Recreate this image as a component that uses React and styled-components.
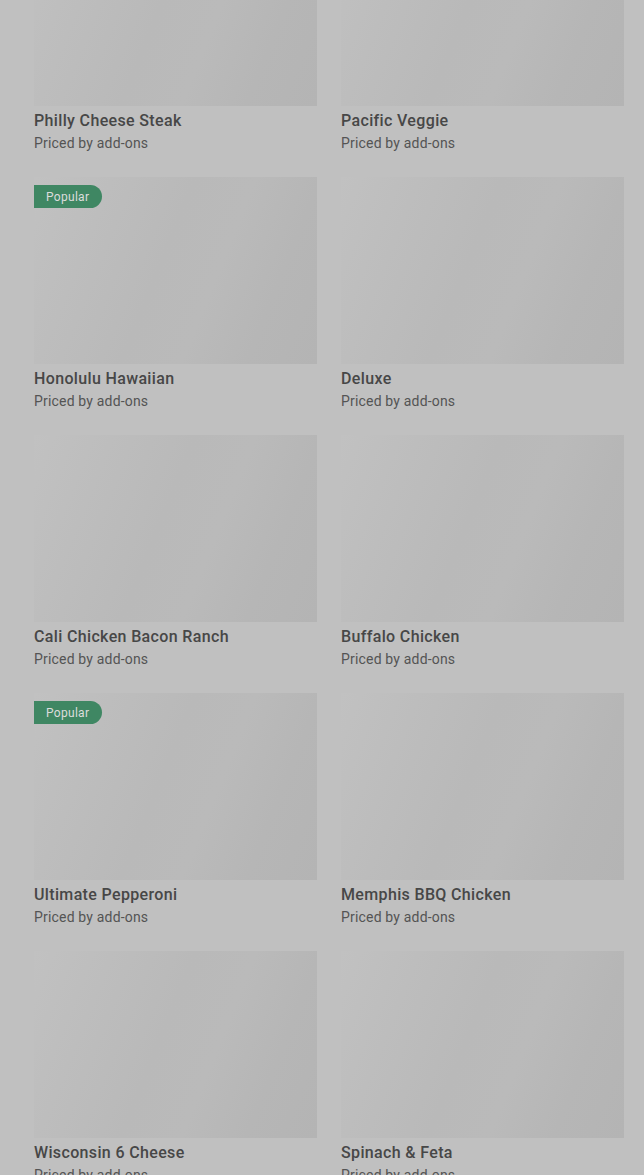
import React from 'react';
import styled, { createGlobalStyle } from 'styled-components';

const GlobalStyle = createGlobalStyle`
  html, body {
    margin: 0;
    padding: 0;
    background: #c0c0c0;
    font-family: Roboto, "Liberation Sans", sans-serif;
    overflow: hidden;
  }
`;

const Grid = styled.div`
  display: grid;
  grid-template-columns: 283px 283px;
  column-gap: 24px;
  row-gap: 25px;
  padding: 0 20px 40px 34px;
  margin-top: -81px;
`;

const Card = styled.div`
  display: flex;
  flex-direction: column;
`;

const Thumb = styled.div`
  position: relative;
  height: 187px;
  background: linear-gradient(
    112deg,
    #c1c1c1 0%,
    #bdbdbd 22%,
    #b9b9b9 45%,
    #bababa 62%,
    #b6b6b6 80%,
    #b4b4b4 100%
  );
`;

const Badge = styled.span`
  position: absolute;
  top: 8px;
  left: 0;
  height: 23px;
  padding: 0 13px 0 12px;
  display: flex;
  align-items: center;
  background: #3f8763;
  color: #dcdcdc;
  font-size: 12px;
  letter-spacing: 0.3px;
  border-radius: 0 12px 12px 0;
`;

const Title = styled.div`
  margin-top: 5px;
  font-size: 16px;
  line-height: 20px;
  font-weight: 500;
  letter-spacing: 0.35px;
  color: #474747;
`;

const Sub = styled.div`
  margin-top: 3px;
  font-size: 14px;
  line-height: 18px;
  letter-spacing: 0.18px;
  color: #545454;
`;

const items = [
  { name: 'Philly Cheese Steak' },
  { name: 'Pacific Veggie' },
  { name: 'Honolulu Hawaiian', popular: true },
  { name: 'Deluxe' },
  { name: 'Cali Chicken Bacon Ranch' },
  { name: 'Buffalo Chicken' },
  { name: 'Ultimate Pepperoni', popular: true },
  { name: 'Memphis BBQ Chicken' },
  { name: 'Wisconsin 6 Cheese' },
  { name: 'Spinach & Feta' },
];

export default function App() {
  return (
    <>
      <GlobalStyle />
      <Grid>
        {items.map(item => (
          <Card key={item.name}>
            <Thumb>{item.popular && <Badge>Popular</Badge>}</Thumb>
            <Title>{item.name}</Title>
            <Sub>Priced by add-ons</Sub>
          </Card>
        ))}
      </Grid>
    </>
  );
}
